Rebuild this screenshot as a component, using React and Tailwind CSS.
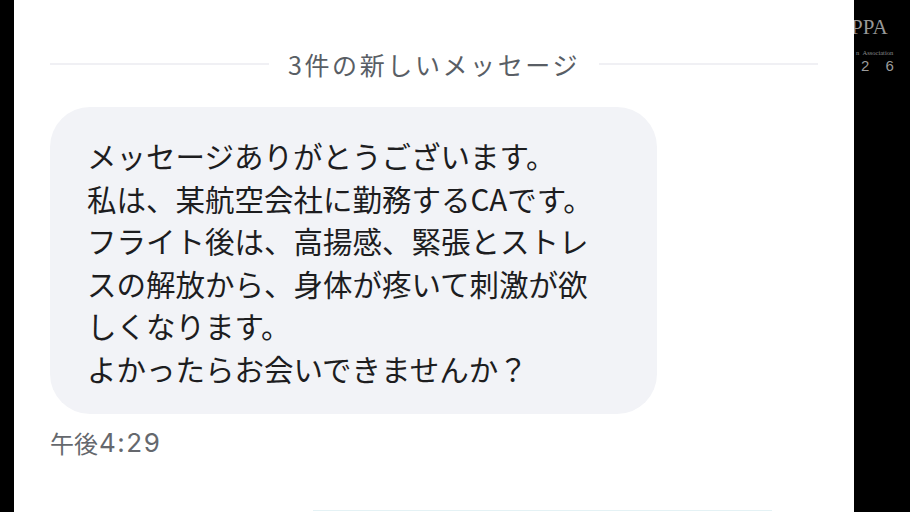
export default function App() {
  const lines = [
    "メッセージありがとうございます。",
    "私は、某航空会社に勤務するCAです。",
    "フライト後は、高揚感、緊張とストレ",
    "スの解放から、身体が疼いて刺激が欲",
    "しくなります。",
    "よかったらお会いできませんか？",
  ];
  return (
    <div
      className="flex h-[512px] w-[910px] overflow-hidden bg-black"
      style={{ fontFamily: '"Noto Sans CJK JP", "Noto Sans", sans-serif' }}
    >
      <div className="w-[14px] shrink-0 bg-black" />
      <div className="relative z-10 flex w-[840px] shrink-0 flex-col bg-white pl-[36px] pr-[36px]">
        <div className="mt-[44px] flex h-[40px] items-center gap-[19px]">
          <div className="h-[2px] flex-1 bg-[#f0f0f4]" />
          <div className="text-[25px] leading-none tracking-[2.6px] text-[#595e65]">
            3件の新しいメッセージ
          </div>
          <div className="h-[2px] flex-1 bg-[#f0f0f4]" />
        </div>
        <div className="mt-[23px] w-[607px] rounded-[40px] bg-[#f2f3f7] pb-[25px] pl-[37px] pt-[27px]">
          <div className="whitespace-nowrap text-[29.5px] leading-[42.5px] text-[#1d1d1f]">
            {lines.map((l, i) => (
              <div key={i}>{l}</div>
            ))}
          </div>
        </div>
        <div className="mt-[14px] flex h-[29px] items-center text-[#65686d]">
          <span className="text-[24px] leading-[29px]">午後</span>
          <span
            className="ml-[1px] text-[26px] leading-[29px] tracking-[1.5px]"
            style={{ fontFamily: 'Inter, "Noto Sans", sans-serif' }}
          >
            4:29
          </span>
        </div>
        <div className="mb-[1px] ml-[263px] mt-auto h-[1px] w-[459px] bg-[#e4f2f5]" />
      </div>
      <div className="flex w-[56px] shrink-0 flex-col bg-black">
        <div
          className="-ml-[3px] mt-[16px] whitespace-nowrap text-[21px] leading-[22px] text-[#979797]"
          style={{ fontFamily: '"Liberation Serif", serif' }}
        >
          PPA
        </div>
        <div
          className="ml-[2px] mt-[11px] whitespace-nowrap text-[6.5px] leading-[8px] text-[#8a8a8a]"
          style={{ fontFamily: '"Liberation Serif", serif' }}
        >
          n&nbsp;&nbsp;Association
        </div>
        <div
          className="ml-[7px] mt-[1px] whitespace-nowrap text-[15px] leading-[16px] tracking-[6px] text-[#9c9c9c]"
          style={{ fontFamily: '"Liberation Sans", sans-serif' }}
        >
          2 6
        </div>
      </div>
    </div>
  );
}
